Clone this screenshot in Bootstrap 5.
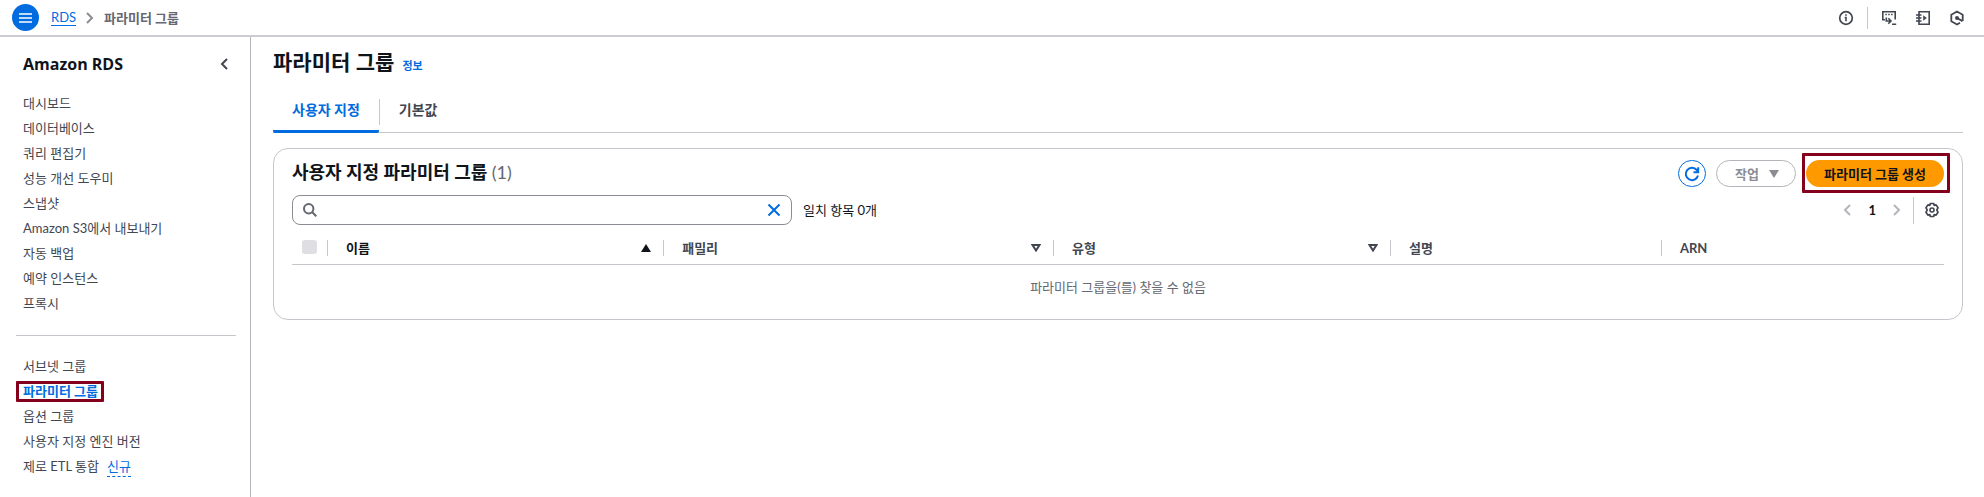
<!DOCTYPE html>
<html lang="ko">
<head>
<meta charset="utf-8">
<meta name="viewport" content="width=device-width, initial-scale=1">
<title>파라미터 그룹 | RDS</title>
<link href="https://cdn.jsdelivr.net/npm/bootstrap@5.3.0/dist/css/bootstrap.min.css" rel="stylesheet">
<style>
  :root { --ink: #0f141a; --body: #424650; --muted: #656871; --line: #c6c6cd; --blue: #006ce0; --note: #85001c; }
  body { font-family: Lato, "Noto Sans CJK KR", sans-serif; font-size: 13px; line-height: 20px; color: var(--ink); background: #fff; }
  svg { display: block; fill: none; stroke: currentColor; stroke-width: 2; }
  button.plain { border: 0; background: none; padding: 0; color: var(--body); }
  a { color: var(--blue); }
  .topbar { height: 37px; border-bottom: 2px solid #ccccd1; padding: 0 19px 0 12px; }
  .menu-btn { width: 27px; height: 27px; border: 0; border-radius: 50%; background: var(--blue); color: #fff; padding: 0; }
  .crumbs { --bs-breadcrumb-margin-bottom: 0; font-size: 13px; gap: 10px; }
  .crumbs a { text-decoration: none; border-bottom: 1px solid var(--blue); line-height: 16px; display: block; }
  .crumbs .here { color: var(--muted); font-weight: 700; }
  .vline { width: 1px; background: var(--line); }
  .topbar .vline { height: 22px; margin: 0 13px; }
  .tools { gap: 18px; }
  .side { width: 251px; border-right: 1px solid #b4b4bb; padding: 16px 14px 0 16px; }
  .side h2, h1 { font-family: "Open Sans", "Noto Sans CJK KR", sans-serif; font-weight: 700; margin: 0; }
  .side h2 { font-size: 16px; line-height: 22px; }
  .side-head { padding: 0 8px 0 7px; margin-bottom: 16px; }
  .side .nav-link { padding: 0; color: var(--body); line-height: 25px; }
  .side .nav-link.active { color: var(--blue); font-weight: 700; }
  .side ul { padding-left: 7px; }
  .side hr { margin: 19px 0 18px; border-color: var(--line); opacity: 1; }
  .flag-new { color: var(--blue); text-decoration: none; border-bottom: 1px dashed var(--blue); line-height: 20px; }
  .noted { position: relative; }
  .noted::after { content: ""; position: absolute; border: 3px solid var(--note); pointer-events: none; border-radius: 1px; }
  .nav-link.noted::after { inset: 2px -6px 2px -7px; }
  .btn.noted::after { inset: -7px -6px -6px -4px; }
  main { padding: 12px 21px 0 22px; min-width: 0; }
  h1 { font-size: 21px; line-height: 26px; }
  .info { font-size: 11px; font-weight: 700; text-decoration: none; }
  .tabs { --bs-nav-tabs-border-color: var(--line); margin-top: 17px; }
  .tabs .nav-link { border: 0; border-bottom: 3px solid transparent; border-radius: 2px; font-size: 14px; font-weight: 700; line-height: 20px; color: var(--body); padding: 7px 19px 10px; }
  .tabs .nav-link.active { color: var(--blue); border-color: var(--blue); }
  .tabs .vline { height: 26px; margin-top: 6px; }
  .panel { border: 1px solid var(--line); border-radius: 15px; margin-top: 15px; padding: 9px 18px 22px; }
  .panel h2 { font-size: 18px; font-weight: 700; line-height: 28px; margin: 0; }
  .panel h2 span { font-weight: 400; color: var(--muted); }
  .acts { gap: 10px; padding-top: 2px; }
  .btn { height: 27px; padding: 0 18px; border-radius: 14px; font-size: 13px; font-weight: 700; line-height: 20px; }
  .btn-round { width: 28px; padding: 0; border-color: var(--blue); color: var(--blue); }
  .btn-acts, .btn-acts:disabled { border-color: #b4b4bb; color: #8c8c94; opacity: 1; padding-right: 16px; gap: 10px; }
  .btn-make, .btn-make:hover { background: #ff9900; color: var(--ink); border: 0; }
  .filters { margin-top: 8px; }
  .find-group { gap: 11px; }
  .find { width: 500px; height: 30px; border: 1px solid #8c8c94; border-radius: 8px; padding: 0 10px; color: var(--muted); }
  .find input { min-width: 0; outline: 0; font-size: 13px; }
  .clear-btn.plain { color: var(--blue); }
  .step-btn.plain { color: #b4b4bb; }
  .pager b { padding: 0 17px; }
  .pager .vline { height: 27px; margin: 0 10px 0 12px; }
  .grid-table { table-layout: fixed; --bs-table-bg: transparent; }
  .grid-table th, .grid-table td { padding: 0; border-color: var(--line); }
  .grid-table th > div { height: 16px; border-right: 1px solid var(--line); padding: 0 12px 0 18px; color: var(--body); line-height: 16px; }
  .grid-table th:last-child > div { border: 0; }
  .grid-table thead th { padding: 7px 0 8px; }
  .grid-table .sorted { color: var(--ink); }
  .grid-table th > .pick { padding-left: 10px; }
  .pick input { appearance: none; display: block; width: 15px; height: 14px; border-radius: 3px; background: #dedee3; margin: 0; }
  .grid-table tbody td { border: 0; padding-top: 12px; color: var(--muted); }
</style>
</head>
<body class="d-flex flex-column min-vh-100">
<header class="topbar d-flex align-items-center justify-content-between">
  <div class="d-flex align-items-center gap-2">
    <button class="menu-btn d-flex align-items-center justify-content-center" aria-label="메뉴"><svg width="13" height="12" viewBox="0 0 13 12"><path d="M0 2h13M0 6h13M0 10h13" stroke-width="1.700"/></svg></button>
    <ol class="breadcrumb crumbs align-items-center ms-1">
      <li><a href="#">RDS</a></li>
      <li><svg width="8" height="12" viewBox="0 0 8 12" color="#8c8c94"><path d="M1 1l5 5-5 5"/></svg></li>
      <li class="here">파라미터 그룹</li>
    </ol>
  </div>
  <div class="d-flex align-items-center">
    <button class="plain" aria-label="정보"><svg width="16" height="16" viewBox="0 0 16 16"><circle cx="8" cy="8" r="6.300" stroke-width="1.700"/><path d="M6.700 7.500H8v3.700M8 4.300v1.500" stroke-width="1.600"/></svg></button>
    <span class="vline"></span>
    <div class="d-flex tools">
      <button class="plain" aria-label="CloudShell"><svg width="16" height="16" viewBox="0 0 16 16"><path d="M4 9.800H1.800V1.800h12.400V9.500" stroke-width="1.600"/><path d="M4.300 4.500h1.500M7.200 4.500h1.500M10.100 4.500h1.500" stroke-width="1.400"/><path d="M5.300 7.500V11h4M7.300 8.300L10 11l-2.700 2.700M11 14.300h4.200" stroke-width="1.600"/></svg></button>
      <button class="plain" aria-label="노트"><svg width="16" height="16" viewBox="0 0 16 16"><path d="M4 1.800h10.200v12.400H4zM1 5h5.500M1 8h5.500M1 11h5.500" stroke-width="1.600"/><path d="M8.200 5.300v5.400L11.800 8z" fill="currentColor" stroke="none"/></svg></button>
      <button class="plain" aria-label="Amazon Q"><svg width="16" height="16" viewBox="0 0 16 16"><path d="M13.700 11V4.700L8 1.500 2.300 4.700v6.600L8 14.500l3-1.700" stroke-linejoin="round" stroke-width="1.800"/><circle cx="8" cy="8" r="2" fill="currentColor" stroke="none"/><path d="M8 8l5.500 3.200"/></svg></button>
    </div>
  </div>
</header>
<div class="d-flex align-items-stretch flex-grow-1">
  <nav class="side flex-shrink-0" aria-label="Amazon RDS">
    <div class="side-head d-flex align-items-center justify-content-between">
      <h2>Amazon RDS</h2>
      <button class="plain" aria-label="닫기"><svg width="8" height="12" viewBox="0 0 8 12"><path d="M7 1L2 6l5 5"/></svg></button>
    </div>
    <ul class="nav flex-column align-items-start">
      <li><a class="nav-link" href="#">대시보드</a></li>
      <li><a class="nav-link" href="#">데이터베이스</a></li>
      <li><a class="nav-link" href="#">쿼리 편집기</a></li>
      <li><a class="nav-link" href="#">성능 개선 도우미</a></li>
      <li><a class="nav-link" href="#">스냅샷</a></li>
      <li><a class="nav-link" href="#">Amazon S3에서 내보내기</a></li>
      <li><a class="nav-link" href="#">자동 백업</a></li>
      <li><a class="nav-link" href="#">예약 인스턴스</a></li>
      <li><a class="nav-link" href="#">프록시</a></li>
    </ul>
    <hr>
    <ul class="nav flex-column align-items-start mb-0">
      <li><a class="nav-link" href="#">서브넷 그룹</a></li>
      <li><a class="nav-link active noted" href="#">파라미터 그룹</a></li>
      <li><a class="nav-link" href="#">옵션 그룹</a></li>
      <li><a class="nav-link" href="#">사용자 지정 엔진 버전</a></li>
      <li class="d-flex align-items-center gap-2"><a class="nav-link" href="#">제로 ETL 통합</a><a class="flag-new" href="#">신규</a></li>
    </ul>
  </nav>
  <main class="flex-grow-1">
    <div class="d-flex align-items-baseline gap-2"><h1>파라미터 그룹</h1><a class="info" href="#">정보</a></div>
    <div class="nav nav-tabs tabs" role="tablist">
      <button class="nav-link active" role="tab" aria-selected="true">사용자 지정</button>
      <span class="vline"></span>
      <button class="nav-link" role="tab" aria-selected="false">기본값</button>
    </div>
    <section class="panel">
      <div class="d-flex justify-content-between">
        <h2>사용자 지정 파라미터 그룹 <span>(1)</span></h2>
        <div class="acts d-flex">
          <button class="btn btn-round d-flex align-items-center justify-content-center" aria-label="새로 고침"><svg width="16" height="16" viewBox="0 0 16 16"><path d="M14 9.500A6.200 6.200 0 1 1 12.800 4L14 5.700M14.200 1.200v5H9.500"/></svg></button>
          <button class="btn btn-acts d-flex align-items-center" disabled>작업 <svg width="10" height="8" viewBox="0 0 10 8"><path d="M0 0h10L5 8z" fill="currentColor" stroke="none"/></svg></button>
          <button class="btn btn-make noted">파라미터 그룹 생성</button>
        </div>
      </div>
      <div class="filters d-flex align-items-center justify-content-between">
        <div class="find-group d-flex align-items-center">
          <div class="find d-flex align-items-center">
            <svg width="14" height="14" viewBox="0 0 14 14"><circle cx="5.700" cy="5.700" r="4.700"/><path d="M9 9l4.300 4.300"/></svg>
            <input class="border-0 flex-grow-1 bg-transparent" type="text" aria-label="검색">
            <button class="plain clear-btn" aria-label="지우기"><svg width="14" height="14" viewBox="0 0 14 14"><path d="M1.500 1.500l11 11M12.500 1.500l-11 11"/></svg></button>
          </div>
          <span>일치 항목 0개</span>
        </div>
        <div class="pager d-flex align-items-center pe-1">
          <button class="plain step-btn" aria-label="이전"><svg width="8" height="12" viewBox="0 0 8 12"><path d="M7 1L2 6l5 5"/></svg></button>
          <b>1</b>
          <button class="plain step-btn" aria-label="다음"><svg width="8" height="12" viewBox="0 0 8 12"><path d="M1 1l5 5-5 5"/></svg></button>
          <span class="vline"></span>
          <button class="plain" aria-label="설정"><svg width="16" height="16" viewBox="0 0 16 16"><path d="M6.300 1.500h3.400l.5 1.900 1.900-.5 1.900 2.900L12.800 8l1.200 2.200-1.900 2.900-1.900-.5-.5 1.900H6.300l-.5-1.900-1.900.5L2 10.200 3.200 8 2 5.800l1.900-2.900 1.900.5z" stroke-width="1.700" stroke-linejoin="round"/><circle cx="8" cy="8" r="2" stroke-width="1.600"/></svg></button>
        </div>
      </div>
      <table class="table grid-table mt-2 mb-0">
        <colgroup><col style="width:36px"><col style="width:20.350%"><col style="width:23.600%"><col style="width:20.400%"><col style="width:16.400%"><col></colgroup>
        <thead><tr>
          <th><div class="pick"><input type="checkbox" disabled aria-label="모두 선택"></div></th>
          <th><div class="sorted d-flex align-items-center justify-content-between">이름<svg width="10" height="8" viewBox="0 0 10 8"><path d="M0 8h10L5 0z" fill="currentColor" stroke="none"/></svg></div></th>
          <th><div class="d-flex align-items-center justify-content-between">패밀리<svg width="10" height="8" viewBox="0 0 10 8"><path d="M1.500 1h7L5 6.500z"/></svg></div></th>
          <th><div class="d-flex align-items-center justify-content-between">유형<svg width="10" height="8" viewBox="0 0 10 8"><path d="M1.500 1h7L5 6.500z"/></svg></div></th>
          <th><div class="d-flex align-items-center">설명</div></th>
          <th><div class="d-flex align-items-center">ARN</div></th>
        </tr></thead>
        <tbody><tr><td colspan="6" class="text-center">파라미터 그룹을(를) 찾을 수 없음</td></tr></tbody>
      </table>
    </section>
  </main>
</div>
<script src="https://cdn.jsdelivr.net/npm/bootstrap@5.3.0/dist/js/bootstrap.bundle.min.js"></script>
</body>
</html>
